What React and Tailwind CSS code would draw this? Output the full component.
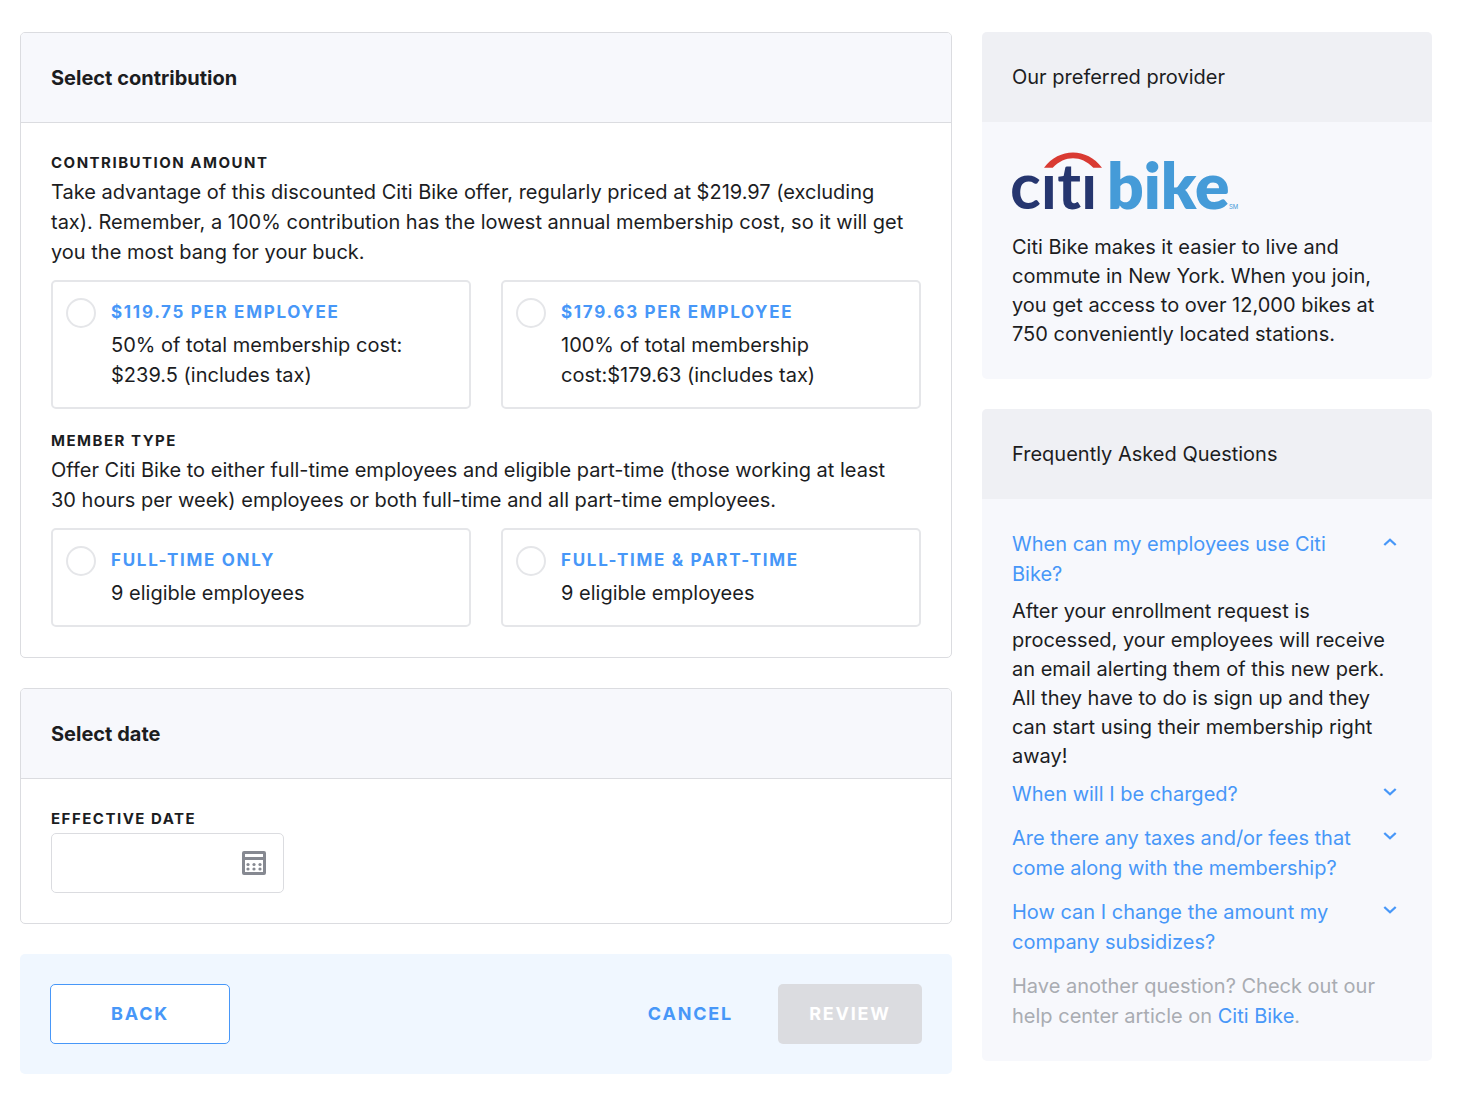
import React, { useState } from 'react';

const CONTRIBUTIONS = [
  {
    value: 'half',
    title: '$119.75 per employee',
    lines: ['50% of total membership cost:', '$239.5 (includes tax)'],
  },
  {
    value: 'full',
    title: '$179.63 per employee',
    lines: ['100% of total membership', 'cost:$179.63 (includes tax)'],
  },
];

const MEMBER_TYPES = [
  { value: 'full-time', title: 'Full-time only', lines: ['9 eligible employees'] },
  { value: 'all', title: 'Full-time & part-time', lines: ['9 eligible employees'] },
];

const FAQS = [
  {
    question: 'When can my employees use Citi Bike?',
    answer:
      'After your enrollment request is processed, your employees will receive an email alerting them of this new perk. All they have to do is sign up and they can start using their membership right away!',
  },
  {
    question: 'When will I be charged?',
    answer: 'You will be charged once your enrollment request is processed.',
  },
  {
    question: 'Are there any taxes and/or fees that come along with the membership?',
    answer: 'All taxes are included in the membership cost.',
  },
  {
    question: 'How can I change the amount my company subsidizes?',
    answer: 'You can select a new contribution when the membership renews.',
  },
];

const CitiBikeLogo = () => (
  <svg width="230" height="60" viewBox="0 0 230 60" className="overflow-visible" role="img" aria-label="Citi Bike">
    <path d="M32 15.7C47 -4.6 75 -4.6 90 15.7H81.3C69 3.2 53 3.2 40.7 15.7Z" fill="#d93a32" />
    <g fontFamily="Lato, sans-serif" fontSize="64" style={{ fontVariantLigatures: 'none' }}>
      <text x="-2" y="57" fontWeight="700" fill="#26366f">cıtı</text>
      <text x="95" y="57" fontWeight="800" fill="#459bd8">bike</text>
    </g>
    <text x="217" y="57" fill="#459bd8" fontFamily="Inter, sans-serif" fontSize="6">SM</text>
  </svg>
);

const CalendarIcon = () => (
  <svg width="24" height="24" viewBox="0 0 24 24" fill="#868991" aria-hidden="true">
    <path
      fillRule="evenodd"
      d="M2 0H22A2 2 0 0 1 24 2V22A2 2 0 0 1 22 24H2A2 2 0 0 1 0 22V2A2 2 0 0 1 2 0ZM3 3V6H21V3ZM3 9V21H21V9Z"
    />
    {[6, 12, 18].map((cx) => (
      <g key={cx}>
        <circle cx={cx} cy="13.5" r="1.6" />
        <circle cx={cx} cy="18" r="1.6" />
      </g>
    ))}
  </svg>
);

const Chevron = ({ open }) => (
  <svg width="14" height="8" viewBox="0 0 14 8" fill="none" stroke="currentColor" strokeWidth="2.3" aria-hidden="true">
    <path d={open ? 'M1.3 7L7 1.7L12.7 7' : 'M1.3 1L7 6.3L12.7 1'} />
  </svg>
);

const Card = ({ title, children }) => (
  <section className="overflow-hidden rounded-[5px] border border-[#dbdce0] bg-white">
    <h2 className="border-b border-[#dbdce0] bg-[#f7f8fc] px-[30px] pt-[31px] pb-[29px] leading-[29px] font-bold">
      {title}
    </h2>
    <div className="p-[30px]">{children}</div>
  </section>
);

const SidePanel = ({ title, children }) => (
  <section className="overflow-hidden rounded-[5px] bg-[#f7f8fc]">
    <h2 className="bg-[#eff0f4] p-[30px]">{title}</h2>
    <div className="p-[30px]">{children}</div>
  </section>
);

const OptionGroup = ({ name, legend, description, options, value, onChange }) => (
  <fieldset>
    <legend className="text-[15px] leading-[20px] font-bold tracking-widest uppercase">{legend}</legend>
    <p className="pt-1">{description}</p>
    <div className="mt-[13px] grid grid-cols-2 gap-[30px]">
      {options.map((option) => (
        <label
          key={option.value}
          className="flex cursor-pointer items-start gap-[15px] rounded-[5px] border-2 border-[#e5e6e9] px-[13px] pt-[15px] pb-[17px]"
        >
          <input
            type="radio"
            name={name}
            value={option.value}
            checked={value === option.value}
            onChange={() => onChange(option.value)}
            className="mt-px h-[30px] w-[30px] shrink-0 appearance-none rounded-full border-2 border-[#e5e6e9] bg-white checked:border-[9px] checked:border-[#4797f8]"
          />
          <span>
            <span className="block pb-[3px] text-[17px] font-bold tracking-widest text-[#4797f8] uppercase">
              {option.title}
            </span>
            {option.lines.map((line) => (
              <span key={line} className="block">{line}</span>
            ))}
          </span>
        </label>
      ))}
    </div>
  </fieldset>
);

const App = () => {
  const [contribution, setContribution] = useState('');
  const [memberType, setMemberType] = useState('');
  const [date, setDate] = useState('');
  const [openFaq, setOpenFaq] = useState(0);

  const ready = contribution && memberType && date;

  return (
    <div className="grid grid-cols-[932fr_450fr] items-start gap-[30px] bg-white pt-8 pr-[34px] pb-5 pl-5 font-['Inter',sans-serif] text-[20px] leading-[30px] text-[#1c1d1f]">
      <main className="flex flex-col gap-[30px]">
        <Card title="Select contribution">
          <div className="flex flex-col gap-[22px]">
            <OptionGroup
              name="contribution"
              legend="Contribution amount"
              description="Take advantage of this discounted Citi Bike offer, regularly priced at $219.97 (excluding tax). Remember, a 100% contribution has the lowest annual membership cost, so it will get you the most bang for your buck."
              options={CONTRIBUTIONS}
              value={contribution}
              onChange={setContribution}
            />
            <OptionGroup
              name="member-type"
              legend="Member type"
              description={'Offer Citi Bike to either full-time employees and eligible part-time (those working at least 30\u00a0hours per week) employees or both full-time and all part-time employees.'}
              options={MEMBER_TYPES}
              value={memberType}
              onChange={setMemberType}
            />
          </div>
        </Card>

        <Card title="Select date">
          <label htmlFor="effective-date" className="block text-[15px] leading-[20px] font-bold tracking-widest uppercase">
            Effective date
          </label>
          <div className="mt-1 flex h-[60px] w-[233px] items-center rounded-[5px] border border-[#dbdce0] pr-[17px]">
            <input
              id="effective-date"
              type="text"
              value={date}
              onChange={(e) => setDate(e.target.value)}
              className="h-full min-w-0 flex-1 px-4 outline-none"
            />
            <CalendarIcon />
          </div>
        </Card>

        <div className="flex items-center rounded-[5px] bg-[#f0f7ff] p-[30px] text-[18px] font-bold">
          <button
            type="button"
            className="h-[60px] w-[180px] rounded-[5px] border border-[#4797f8] bg-white tracking-widest text-[#4797f8] uppercase"
          >
            Back
          </button>
          <button type="button" className="mr-[45px] ml-auto tracking-widest text-[#4797f8] uppercase">
            Cancel
          </button>
          <button
            type="button"
            disabled={!ready}
            className="h-[60px] w-[144px] rounded-[5px] bg-[#4797f8] tracking-widest text-white uppercase disabled:bg-[#dbdce0]"
          >
            Review
          </button>
        </div>
      </main>

      <aside className="flex flex-col gap-[30px]">
        <SidePanel title="Our preferred provider">
          <CitiBikeLogo />
          <p className="pt-[21px] leading-[29px]">
            Citi Bike makes it easier to live and commute in New York. When you join, you get access to over 12,000
            bikes at 750 conveniently located stations.
          </p>
        </SidePanel>

        <SidePanel title="Frequently Asked Questions">
          <ul>
            {FAQS.map((faq, i) => (
              <li key={faq.question} className={openFaq === i ? 'pb-2' : 'pb-[14px]'}>
                <button
                  type="button"
                  aria-expanded={openFaq === i}
                  onClick={() => setOpenFaq(openFaq === i ? -1 : i)}
                  className="flex w-full items-start justify-between gap-8 pr-[5px] text-left text-[#4797f8]"
                >
                  <span>{faq.question}</span>
                  <span className="shrink-0 pt-[9px]">
                    <Chevron open={openFaq === i} />
                  </span>
                </button>
                {openFaq === i && <p className="pt-2 leading-[29px]">{faq.answer}</p>}
              </li>
            ))}
          </ul>
          <p className="text-[#a9acb2]">
            Have another question? Check out our help center article on{' '}
            <a href="#citi-bike" className="text-[#4797f8]">Citi Bike</a>.
          </p>
        </SidePanel>
      </aside>
    </div>
  );
};

export default App;
